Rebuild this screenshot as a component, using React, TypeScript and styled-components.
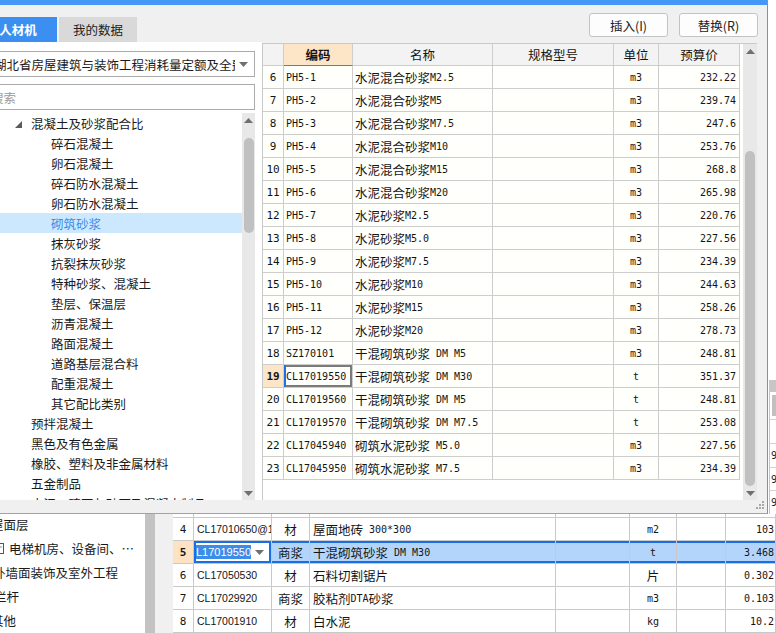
import React from "react";
import styled, { createGlobalStyle } from "styled-components";

const GlobalStyle = createGlobalStyle`
  html, body {
    margin: 0;
    padding: 0;
  }
  body {
    width: 776px;
    height: 633px;
    overflow: hidden;
    background: #fff;
    font-family: "Noto Sans CJK SC", "Liberation Sans", sans-serif;
    font-size: 12px;
    color: #1a1a1a;
  }
`;

/* ---------- data ---------- */

const materials = [
  ["6", "PH5-1", "水泥混合砂浆M2.5", "m3", "232.22"],
  ["7", "PH5-2", "水泥混合砂浆M5", "m3", "239.74"],
  ["8", "PH5-3", "水泥混合砂浆M7.5", "m3", "247.6"],
  ["9", "PH5-4", "水泥混合砂浆M10", "m3", "253.76"],
  ["10", "PH5-5", "水泥混合砂浆M15", "m3", "268.8"],
  ["11", "PH5-6", "水泥混合砂浆M20", "m3", "265.98"],
  ["12", "PH5-7", "水泥砂浆M2.5", "m3", "220.76"],
  ["13", "PH5-8", "水泥砂浆M5.0", "m3", "227.56"],
  ["14", "PH5-9", "水泥砂浆M7.5", "m3", "234.39"],
  ["15", "PH5-10", "水泥砂浆M10", "m3", "244.63"],
  ["16", "PH5-11", "水泥砂浆M15", "m3", "258.26"],
  ["17", "PH5-12", "水泥砂浆M20", "m3", "278.73"],
  ["18", "SZ170101", "干混砌筑砂浆 DM M5", "m3", "248.81"],
  ["19", "CL17019550", "干混砌筑砂浆 DM M30", "t", "351.37"],
  ["20", "CL17019560", "干混砌筑砂浆 DM M5", "t", "248.81"],
  ["21", "CL17019570", "干混砌筑砂浆 DM M7.5", "t", "253.08"],
  ["22", "CL17045940", "砌筑水泥砂浆 M5.0", "m3", "227.56"],
  ["23", "CL17045950", "砌筑水泥砂浆 M7.5", "m3", "234.39"],
];

const categories: { label: string; level: 1 | 2; open?: boolean; selected?: boolean }[] = [
  { label: "混凝土及砂浆配合比", level: 1, open: true },
  { label: "碎石混凝土", level: 2 },
  { label: "卵石混凝土", level: 2 },
  { label: "碎石防水混凝土", level: 2 },
  { label: "卵石防水混凝土", level: 2 },
  { label: "砌筑砂浆", level: 2, selected: true },
  { label: "抹灰砂浆", level: 2 },
  { label: "抗裂抹灰砂浆", level: 2 },
  { label: "特种砂浆、混凝土", level: 2 },
  { label: "垫层、保温层", level: 2 },
  { label: "沥青混凝土", level: 2 },
  { label: "路面混凝土", level: 2 },
  { label: "道路基层混合料", level: 2 },
  { label: "配重混凝土", level: 2 },
  { label: "其它配比类别", level: 2 },
  { label: "预拌混凝土", level: 1 },
  { label: "黑色及有色金属", level: 1 },
  { label: "橡胶、塑料及非金属材料", level: 1 },
  { label: "五金制品", level: 1 },
  { label: "水泥、砖瓦灰砂石及混凝土制品", level: 1 },
];

const billRows = [
  { no: "4", code: "CL17010650@1", kind: "材", name: "屋面地砖 300*300", unit: "m2", qty: "103" },
  { no: "5", code: "L17019550", kind: "商浆", name: "干混砌筑砂浆 DM M30", unit: "t", qty: "3.468", active: true },
  { no: "6", code: "CL17050530", kind: "材", name: "石料切割锯片", unit: "片", qty: "0.302" },
  { no: "7", code: "CL17029920", kind: "商浆", name: "胶粘剂DTA砂浆", unit: "m3", qty: "0.103" },
  { no: "8", code: "CL17001910", kind: "材", name: "白水泥", unit: "kg", qty: "10.2" },
];

const navItems = [
  { label: "屋面层", indent: 11 },
  { label: "电梯机房、设备间、…", indent: 14, icon: true },
  { label: "外墙面装饰及室外工程", indent: 13 },
  { label: "栏杆", indent: 14 },
  { label: "其他", indent: 11 },
];

/* ---------- mixed CJK / latin text ---------- */

const CJK = /([\u2e80-\u9fff\uff00-\uffef]+)/;

const Latin = styled.span<{ $sans?: boolean }>`
  font-family: ${({ $sans }) => ($sans ? '"Liberation Sans"' : '"DejaVu Sans Mono"')}, monospace;
  font-size: ${({ $sans }) => ($sans ? "10.5px" : "10px")};
  white-space: pre;
`;

const Mixed = ({ text, sans }: { text: string; sans?: boolean }) => (
  <>
    {text.split(CJK).map((part, i) =>
      !part ? null : i % 2 ? (
        <span key={i}>{part}</span>
      ) : (
        <Latin key={i} $sans={sans}>
          {part}
        </Latin>
      )
    )}
  </>
);

/* ---------- icons ---------- */

const Arrow = ({ down }: { down?: boolean }) => (
  <svg width="9" height="5" viewBox="0 0 9 5">
    <polygon points={down ? "0,0 9,0 4.5,5" : "0,5 9,5 4.5,0"} fill="#6f6f6f" />
  </svg>
);

const OpenCaret = () => (
  <svg width="7" height="7" viewBox="0 0 7 7">
    <polygon points="7,0 7,7 0,7" fill="#5a5a5a" />
  </svg>
);

const Grip = () => (
  <svg width="9" height="9" viewBox="0 0 9 9">
    {[
      [6, 0],
      [3, 3],
      [6, 3],
      [0, 6],
      [3, 6],
      [6, 6],
    ].map(([x, y]) => (
      <rect key={`${x}-${y}`} x={x} y={y} width="2" height="2" fill="#a8a8a8" />
    ))}
  </svg>
);

const DocIcon = () => (
  <svg width="10" height="11" viewBox="0 0 10 11">
    <rect x="0.5" y="0.5" width="9" height="10" fill="#fff" stroke="#555" />
    <line x1="2" y1="4" x2="8" y2="4" stroke="#888" />
  </svg>
);

/* ---------- page ---------- */

const Screen = styled.div`
  position: relative;
  width: 776px;
  height: 633px;
  overflow: hidden;
  background: #fff;
`;

const MainApp = styled.div`
  display: flex;
  flex-direction: column;
  height: 100%;
`;

const UpperArea = styled.div`
  height: 514px;
  display: flex;
  justify-content: flex-end;
  background: #fff;
`;

const EdgeGrid = styled.div`
  width: 7px;
  padding-top: 380px;
  display: flex;
  flex-direction: column;
`;

const EdgeHead = styled.div`
  height: 12px;
  background: #c6c6c6;
`;

const EdgeSub = styled.div`
  height: 28px;
  border-left: 1px solid #c4c4c4;
  display: flex;
  justify-content: flex-end;
  padding: 3px 0;
  box-sizing: border-box;

  &::after {
    content: "";
    width: 4px;
    background: #c0c0c0;
  }
`;

const EdgeRow = styled.div`
  height: 24px;
  box-sizing: border-box;
  border-left: 1px solid #c4c4c4;
  border-top: 1px solid #d2d2d2;
  padding-left: 1px;
  display: flex;
  align-items: center;
  font-family: "DejaVu Sans Mono", monospace;
  font-size: 10px;
  color: #222;
`;

const LowerArea = styled.div`
  flex: 1;
  display: flex;
  min-height: 0;
`;

const NavTree = styled.div`
  width: 145px;
  background: #fff;
  overflow: hidden;
`;

const NavList = styled.div`
  margin: -2px 0 0 -20px;
`;

const NavItem = styled.div<{ $indent: number }>`
  height: 24px;
  display: flex;
  align-items: center;
  gap: 5px;
  padding-left: ${({ $indent }) => $indent}px;
  white-space: nowrap;
  font-size: 12.5px;
  color: #1a1a1a;
`;

const NavScroll = styled.div`
  width: 10px;
  background: #c3c3c3;
`;

const Gutter = styled.div`
  width: 18px;
  background: #f0f0f0;
`;

const BillTable = styled.div`
  flex: 1;
  background: #fff;
  overflow: hidden;
`;

const BillRow = styled.div<{ $partial?: boolean }>`
  display: grid;
  grid-template-columns: 21px 78px 38px 246px 74px 47px 49px 50px;
  height: ${({ $partial }) => ($partial ? "4px" : "23px")};
`;

const BillCell = styled.div<{
  $align?: "left" | "center" | "right";
  $active?: boolean;
  $focus?: boolean;
  $num?: boolean;
}>`
  box-sizing: border-box;
  display: flex;
  align-items: center;
  justify-content: ${({ $align }) =>
    $align === "center" ? "center" : $align === "right" ? "flex-end" : "flex-start"};
  padding: 0 ${({ $align }) => ($align === "right" ? "1px" : "3px")};
  border-right: 1px solid #c9c9c9;
  border-bottom: 1px solid #c9c9c9;
  white-space: nowrap;
  overflow: hidden;
  font-size: 12.5px;
  color: #151515;
  background: ${({ $active, $num, $focus }) =>
    $focus ? "#fff" : $active && $num ? "#fde3c4" : $active ? "#b4d5fb" : "#fff"};
  font-weight: ${({ $active, $num }) => ($active && $num ? 700 : 400)};
  box-shadow: ${({ $active, $focus, $num }) =>
    $focus
      ? "inset 0 0 0 2px #1b6de3"
      : $active && !$num
      ? "inset 0 2px 0 #1b6de3, inset 0 -2px 0 #1b6de3"
      : "none"};
`;

const RowNo = styled.span`
  font-family: "DejaVu Sans Mono", monospace;
  font-size: 11px;
`;

const Picked = styled.span`
  background: #3b8de8;
  color: #fff;
  font-family: "Liberation Sans", sans-serif;
  font-size: 11px;
  line-height: 14px;
  margin-left: -1px;
`;

const ComboCaret = styled.span`
  margin-left: auto;
  padding-right: 4px;
  display: flex;
`;

/* ---------- dialog ---------- */

const Dialog = styled.div`
  position: absolute;
  left: -21px;
  top: 0;
  width: 789px;
  height: 514px;
  box-sizing: border-box;
  display: flex;
  flex-direction: column;
  background: #f0f0f0;
  border-right: 1px solid #8f8f8f;
  border-bottom: 1px solid #a2a2a2;
`;

const TitleBar = styled.div`
  height: 5px;
  background: #4497f4;
`;

const DialogBody = styled.div`
  height: 495px;
  display: flex;
`;

const DialogFoot = styled.div`
  flex: 1;
  display: flex;
  justify-content: flex-end;
  align-items: flex-start;
  padding: 1px 2px 0 0;
`;

const LeftPane = styled.div`
  width: 283px;
  display: flex;
  flex-direction: column;
`;

const TabBar = styled.div`
  height: 37px;
  box-sizing: border-box;
  padding-top: 12px;
  display: flex;
  gap: 2px;
`;

const Tab = styled.div<{ $active?: boolean }>`
  width: 78px;
  height: 25px;
  display: flex;
  align-items: center;
  justify-content: center;
  font-size: 12.5px;
  font-weight: ${({ $active }) => ($active ? 700 : 400)};
  color: ${({ $active }) => ($active ? "#fff" : "#222")};
  background: ${({ $active }) => ($active ? "#3b8ff0" : "#d9d9d9")};
`;

const LeftBody = styled.div`
  flex: 1;
  min-height: 0;
  background: #fff;
  padding: 9px 7px 0 9px;
  display: flex;
  flex-direction: column;
`;

const SelectBox = styled.div`
  height: 26px;
  box-sizing: border-box;
  border: 1px solid #ababab;
  display: flex;
  align-items: center;
  padding: 0 6px 0 5px;
  gap: 4px;
  white-space: nowrap;
  overflow: hidden;
  font-size: 12.5px;
  color: #1a1a1a;
`;

const SelectText = styled.span`
  flex: 1;
  overflow: hidden;
`;

const SearchBox = styled.div`
  margin-top: 7px;
  height: 26px;
  box-sizing: border-box;
  border: 1px solid #ababab;
  display: flex;
  align-items: center;
  padding-left: 2px;
  font-size: 12.5px;
  color: #9a9a9a;
`;

const TreeArea = styled.div`
  margin-top: 3px;
  flex: 1;
  min-height: 0;
  display: flex;
`;

const TreeList = styled.div`
  flex: 1;
  overflow: hidden;
`;

const TreeRow = styled.div<{ $level: number; $selected?: boolean }>`
  height: 20px;
  display: flex;
  align-items: center;
  padding-left: ${({ $level }) => ($level === 1 ? 43 : 63)}px;
  white-space: nowrap;
  font-size: 12.5px;
  color: ${({ $selected }) => ($selected ? "#3a8be4" : "#1a1a1a")};
  background: ${({ $selected }) => ($selected ? "#cce8ff" : "transparent")};
`;

const TreeCaret = styled.span`
  display: flex;
  width: 16px;
  margin-left: -16px;
  padding-top: 2px;
`;

const ScrollBar = styled.div<{ $width: number }>`
  width: ${({ $width }) => $width}px;
  background: #e8e8e8;
  display: flex;
  flex-direction: column;
  align-items: center;
`;

const ScrollArrow = styled.div`
  height: 14px;
  width: 100%;
  display: flex;
  align-items: center;
  justify-content: center;
`;

const ScrollTrack = styled.div`
  flex: 1;
  width: 100%;
  display: flex;
  justify-content: center;
`;

const ScrollThumb = styled.div<{ $offset: number; $size: number }>`
  margin-top: ${({ $offset }) => $offset}px;
  width: 10px;
  height: ${({ $size }) => $size}px;
  border-radius: 5px;
  background: #c0c0c0;
`;

const RightPane = styled.div`
  flex: 1;
  display: flex;
  flex-direction: column;
`;

const ButtonRow = styled.div`
  height: 38px;
  box-sizing: border-box;
  padding: 8px 9px 0 0;
  display: flex;
  justify-content: flex-end;
  align-items: flex-start;
  gap: 11px;
`;

const Button = styled.button`
  width: 79px;
  height: 24px;
  box-sizing: border-box;
  border: 1px solid #c3c3c3;
  border-radius: 3px;
  background: #fdfdfd;
  font-family: "Noto Sans CJK SC", "Liberation Sans", sans-serif;
  font-size: 12.5px;
  color: #222;
  padding: 0;
`;

const GridFrame = styled.div`
  flex: 1;
  min-height: 0;
  margin-right: 10px;
  display: flex;
  background: #fff;
  border-top: 1px solid #c9c9c9;
  border-left: 1px solid #c9c9c9;
`;

const Grid = styled.div`
  flex: 1;
  overflow: hidden;
`;

const GridRow = styled.div<{ $head?: boolean }>`
  display: grid;
  grid-template-columns: 21px 69px 140px 121px 45px 81px;
  height: ${({ $head }) => ($head ? "22px" : "23px")};
`;

const GridCell = styled.div<{
  $align?: "left" | "center" | "right";
  $head?: boolean;
  $key?: boolean;
  $mark?: boolean;
  $focus?: boolean;
}>`
  box-sizing: border-box;
  display: flex;
  align-items: center;
  justify-content: ${({ $align }) =>
    $align === "center" ? "center" : $align === "right" ? "flex-end" : "flex-start"};
  padding: 0 3px 0 ${({ $align }) => ($align === "left" ? "2px" : "3px")};
  border-right: 1px solid #cdcdcd;
  border-bottom: 1px solid ${({ $key }) => ($key ? "#3a86e0" : "#cdcdcd")};
  white-space: nowrap;
  overflow: hidden;
  font-size: 12.5px;
  font-weight: ${({ $key, $mark }) => ($key || $mark ? 700 : 400)};
  color: #141414;
  background: ${({ $head, $key, $mark }) =>
    $key || $mark ? "#fde5c8" : $head ? "#f3f3f3" : "#fffffb"};
  box-shadow: ${({ $focus }) =>
    $focus ? "inset 2px 0 0 #1a73e8, inset 0 0 0 2px #7b7b7b" : "none"};
`;

const SubSpace = styled.div`
  flex: 1;
`;

export default function App() {
  return (
    <>
      <GlobalStyle />
      <Screen>
        <MainApp>
          <UpperArea>
            <EdgeGrid>
              <EdgeHead />
              <EdgeSub />
              <EdgeRow />
              <EdgeRow>9</EdgeRow>
              <EdgeRow>9</EdgeRow>
              <EdgeRow>9</EdgeRow>
            </EdgeGrid>
          </UpperArea>
          <LowerArea>
            <NavTree>
              <NavList>
                {navItems.map((item) => (
                  <NavItem key={item.label} $indent={item.indent}>
                    {item.icon && <DocIcon />}
                    {item.label}
                  </NavItem>
                ))}
              </NavList>
            </NavTree>
            <NavScroll />
            <Gutter />
            <BillTable>
              <BillRow $partial>
                {Array.from({ length: 8 }).map((_, i) => (
                  <BillCell key={i} />
                ))}
              </BillRow>
              {billRows.map((r) => (
                <BillRow key={r.no}>
                  <BillCell $align="center" $num $active={r.active}>
                    <RowNo>{r.no}</RowNo>
                  </BillCell>
                  <BillCell $focus={r.active}>
                    {r.active ? (
                      <>
                        <Picked>{r.code}</Picked>
                        <ComboCaret>
                          <Arrow down />
                        </ComboCaret>
                      </>
                    ) : (
                      <Latin $sans>{r.code}</Latin>
                    )}
                  </BillCell>
                  <BillCell $align="center" $active={r.active}>
                    {r.kind}
                  </BillCell>
                  <BillCell $active={r.active}>
                    <Mixed text={r.name} />
                  </BillCell>
                  <BillCell $active={r.active} />
                  <BillCell $align="center" $active={r.active}>
                    <Mixed text={r.unit} />
                  </BillCell>
                  <BillCell $active={r.active} />
                  <BillCell $align="right" $active={r.active}>
                    <Mixed text={r.qty} />
                  </BillCell>
                </BillRow>
              ))}
            </BillTable>
          </LowerArea>
        </MainApp>

        <Dialog>
          <TitleBar />
          <DialogBody>
            <LeftPane>
              <TabBar>
                <Tab $active>人材机</Tab>
                <Tab>我的数据</Tab>
              </TabBar>
              <LeftBody>
                <SelectBox>
                  <SelectText>湖北省房屋建筑与装饰工程消耗量定额及全费用基价表(2018)</SelectText>
                  <Arrow down />
                </SelectBox>
                <SearchBox>搜索</SearchBox>
                <TreeArea>
                  <TreeList>
                    {categories.map((c) => (
                      <TreeRow key={c.label} $level={c.level} $selected={c.selected}>
                        {c.open && (
                          <TreeCaret>
                            <OpenCaret />
                          </TreeCaret>
                        )}
                        {c.label}
                      </TreeRow>
                    ))}
                  </TreeList>
                  <ScrollBar $width={13}>
                    <ScrollArrow>
                      <Arrow />
                    </ScrollArrow>
                    <ScrollTrack>
                      <ScrollThumb $offset={11} $size={95} />
                    </ScrollTrack>
                    <ScrollArrow>
                      <Arrow down />
                    </ScrollArrow>
                  </ScrollBar>
                </TreeArea>
              </LeftBody>
            </LeftPane>

            <RightPane>
              <ButtonRow>
                <Button>插入(I)</Button>
                <Button>替换(R)</Button>
              </ButtonRow>
              <GridFrame>
                <Grid>
                  <GridRow $head>
                    <GridCell $head />
                    <GridCell $head $key $align="center">
                      编码
                    </GridCell>
                    <GridCell $head $align="center">
                      名称
                    </GridCell>
                    <GridCell $head $align="center">
                      规格型号
                    </GridCell>
                    <GridCell $head $align="center">
                      单位
                    </GridCell>
                    <GridCell $head $align="center">
                      预算价
                    </GridCell>
                  </GridRow>
                  {materials.map(([no, code, name, unit, price]) => {
                    const current = no === "19";
                    return (
                      <GridRow key={no}>
                        <GridCell $align="center" $mark={current}>
                          <RowNo>{no}</RowNo>
                        </GridCell>
                        <GridCell $align="left" $focus={current}>
                          <Latin>{code}</Latin>
                        </GridCell>
                        <GridCell $align="left">
                          <Mixed text={name} />
                        </GridCell>
                        <GridCell />
                        <GridCell $align="center">
                          <Latin>{unit}</Latin>
                        </GridCell>
                        <GridCell $align="right">
                          <Latin>{price}</Latin>
                        </GridCell>
                      </GridRow>
                    );
                  })}
                </Grid>
                <ScrollBar $width={14}>
                  <ScrollArrow>
                    <Arrow />
                  </ScrollArrow>
                  <ScrollTrack>
                    <ScrollThumb $offset={93} $size={335} />
                  </ScrollTrack>
                  <ScrollArrow>
                    <Arrow down />
                  </ScrollArrow>
                </ScrollBar>
              </GridFrame>
            </RightPane>
          </DialogBody>
          <DialogFoot>
            <SubSpace />
            <Grip />
          </DialogFoot>
        </Dialog>
      </Screen>
    </>
  );
}
